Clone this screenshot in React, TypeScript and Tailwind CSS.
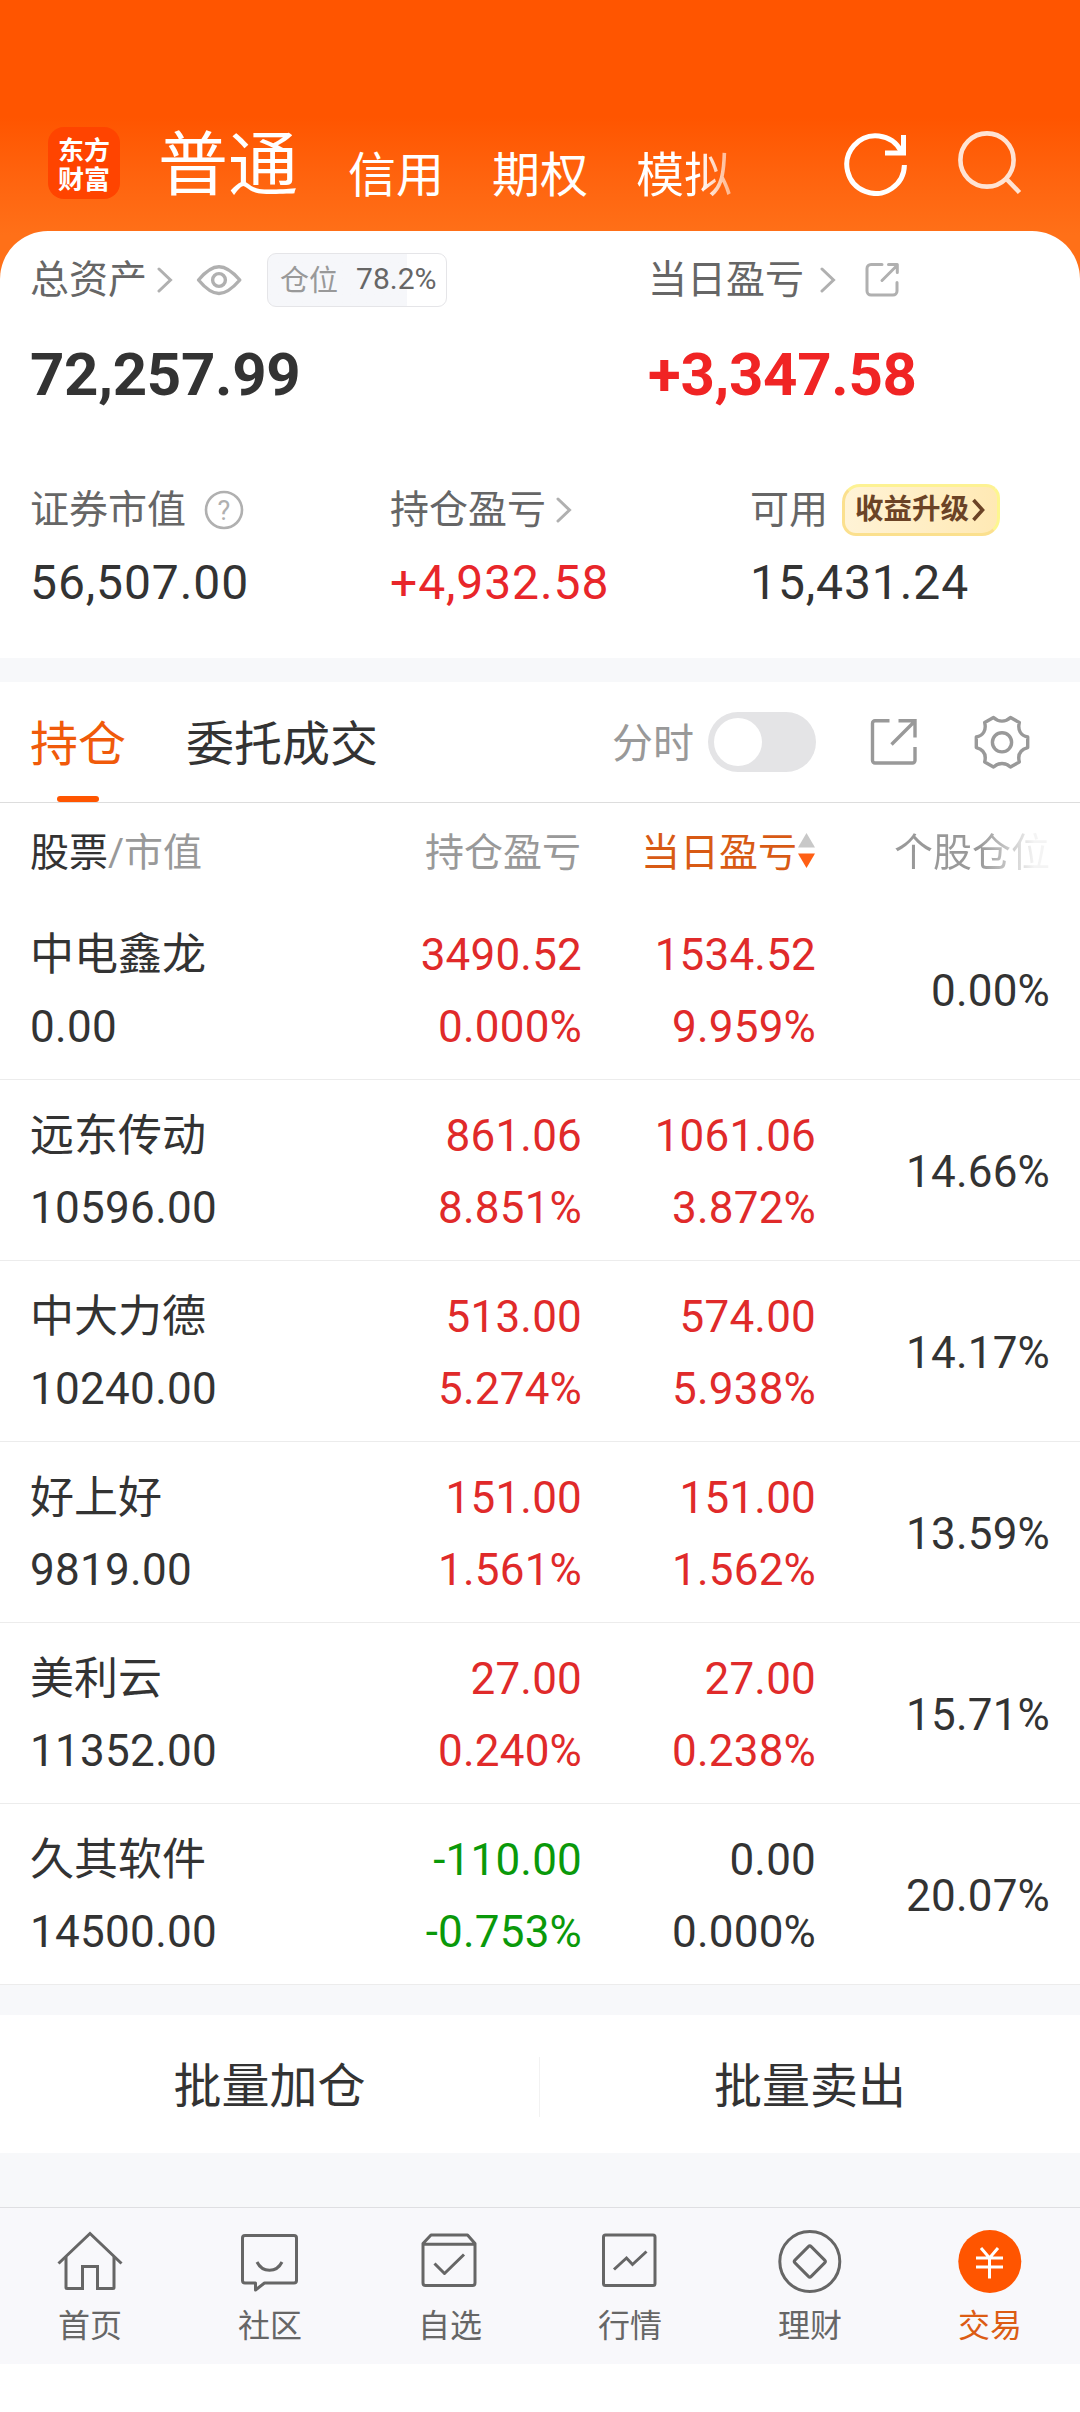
import type { ReactNode } from "react";

interface Holding {
  name: string;
  value: string;
  profit: string;
  profitRate: string;
  today: string;
  todayRate: string;
  position: string;
}

const holdings: Holding[] = [
  { name: "中电鑫龙", value: "0.00", profit: "3490.52", profitRate: "0.000%", today: "1534.52", todayRate: "9.959%", position: "0.00%" },
  { name: "远东传动", value: "10596.00", profit: "861.06", profitRate: "8.851%", today: "1061.06", todayRate: "3.872%", position: "14.66%" },
  { name: "中大力德", value: "10240.00", profit: "513.00", profitRate: "5.274%", today: "574.00", todayRate: "5.938%", position: "14.17%" },
  { name: "好上好", value: "9819.00", profit: "151.00", profitRate: "1.561%", today: "151.00", todayRate: "1.562%", position: "13.59%" },
  { name: "美利云", value: "11352.00", profit: "27.00", profitRate: "0.240%", today: "27.00", todayRate: "0.238%", position: "15.71%" },
  { name: "久其软件", value: "14500.00", profit: "-110.00", profitRate: "-0.753%", today: "0.00", todayRate: "0.000%", position: "20.07%" },
];

const trendColor = (amount: string) => {
  const n = parseFloat(amount);
  if (n > 0) return "text-[#e02a2a]";
  if (n < 0) return "text-[#0a990a]";
  return "text-[#333333]";
};

function Chevron() {
  return (
    <svg width="16" height="26" viewBox="0 0 16 26" fill="none" stroke="#b0b0b0" strokeWidth="3" strokeLinecap="round">
      <path d="M2 2 L13.5 13 L2 24" />
    </svg>
  );
}

function Header() {
  return (
    <header className="h-[280px] bg-linear-to-b from-[#ff5500] from-[42%] to-[#ff7018] to-[84%] pt-[121px]">
      <div className="flex h-[84px] items-center pl-12">
        <div className="flex h-[72px] w-[72px] items-center justify-center rounded-2xl bg-[#ff4400]">
          <span className="w-[52px] break-all font-['Noto_Sans_CJK_SC',sans-serif] text-[26px] leading-[29px] font-bold text-white">
            东方财富
          </span>
        </div>
        <div className="ml-[38px] pt-[5px] text-[70px] leading-[84px] text-white">普通</div>
        <nav className="ml-[50px] flex gap-12 pt-[25px] text-[48px] leading-[60px] text-white">
          <span>信用</span>
          <span>期权</span>
          <span className="bg-linear-to-r from-white from-65% to-white/50 bg-clip-text text-transparent">模拟</span>
        </nav>
        <svg className="ml-[111px]" width="66" height="66" viewBox="843 130 66 66" fill="none" stroke="#fff" strokeWidth="5">
          <path d="M904.4 165 A28.8 28.8 0 1 1 901 151" />
          <path d="M903.5 135 V153 H885" />
        </svg>
        <svg className="ml-[47px]" width="66" height="66" viewBox="956 130 66 66" fill="none" stroke="#ffe3d3" strokeWidth="4.6">
          <circle cx="987" cy="160" r="26.6" />
          <path d="M1006 178.500 L1019.500 192.500" />
        </svg>
      </div>
    </header>
  );
}

function Summary() {
  return (
    <section className="-mt-[49px] h-[427px] rounded-t-[48px] bg-white pt-[21px] text-[39px] text-[#666666]">
      <div className="flex h-[56px] items-center px-[30px]">
        <div className="flex w-[618px] items-center">
          <span>总资产</span>
          <span className="ml-2.5"><Chevron /></span>
          <svg className="ml-[22px]" width="48" height="34" viewBox="195 261 48 34" fill="none" stroke="#b0b0b0" strokeWidth="3.4">
            <path d="M198.500 278 C206 269 212 264.700 219 264.700 S232 269 239.800 278 C232 287 226 291.500 219 291.500 S206 287 198.500 278 Z" strokeLinejoin="round" />
            <circle cx="219" cy="278" r="6.400" />
          </svg>
          <div className="ml-6 flex h-[54px] w-[180px] items-center gap-[18px] overflow-hidden rounded-[9px] border border-[#e5e5e8] bg-linear-to-r from-[#f6f7fa] from-[78.2%] to-white to-[78.2%] pl-3 text-[29px]">
            <span className="pt-[3px] text-[#999999]">仓位</span>
            <span className="pb-[3px] text-[30px]">78.2%</span>
          </div>
        </div>
        <span>当日盈亏</span>
        <span className="ml-4"><Chevron /></span>
        <svg className="ml-[28px]" width="36" height="36" viewBox="864 262 36 36" fill="none" stroke="#b0b0b0" strokeWidth="3" strokeLinecap="round" strokeLinejoin="round">
          <path d="M882 264.500 H871 a4 4 0 0 0 -4 4 V291 a4 4 0 0 0 4 4 H893 a4 4 0 0 0 4 -4 V282.500" />
          <path d="M882 280.500 L897 265.500 M888.500 264.500 H897.300 V272.500" />
        </svg>
      </div>
      <div className="mt-[31px] flex px-[30px] text-[60px] leading-[72px] font-bold tracking-[-0.3px]">
        <span className="w-[618px] text-[#333333]">72,257.99</span>
        <span className="text-[#f02424]">+3,347.58</span>
      </div>
      <div className="mt-[71px] grid grid-cols-3">
        <div className="pl-[30px]">
          <div className="flex h-[56px] items-center">
            证券市值
            <svg className="ml-[18px]" width="40" height="40" viewBox="0 0 40 40">
              <circle cx="20" cy="20" r="18" fill="none" stroke="#b0b0b0" strokeWidth="2.600" />
              <text x="20" y="29.500" textAnchor="middle" fontSize="27" fill="#b0b0b0" fontFamily="Roboto">?</text>
            </svg>
          </div>
          <div className="mt-[17px] text-[48px] leading-[56px] tracking-[0.9px] text-[#333333]">56,507.00</div>
        </div>
        <div className="pl-[30px]">
          <div className="flex h-[56px] items-center gap-2.5">
            持仓盈亏
            <Chevron />
          </div>
          <div className="mt-[17px] text-[48px] leading-[56px] tracking-[0.9px] text-[#e8262a]">+4,932.58</div>
        </div>
        <div className="pl-[30px]">
          <div className="flex h-[56px] items-center">
            可用
            <div className="ml-[14px] flex h-[52px] w-[158px] items-center gap-[3px] rounded-[14px] rounded-tl-[18px] rounded-br-[18px] border-[3px] border-t-[#fdf293] border-r-[#fdf68f] border-b-[#fbe08e] border-l-[#fbe08e] bg-linear-to-r from-[#fff3d6] to-[#ffe9b4] pl-[10px] text-[28.500px] font-bold text-[#6b4326]">
              收益升级
              <svg width="13" height="24" viewBox="0 0 13 24" fill="none" stroke="#6b4326" strokeWidth="3.600">
                <path d="M1.500 2 L10.500 12 L1.500 22" />
              </svg>
            </div>
          </div>
          <div className="mt-[17px] text-[48px] leading-[56px] tracking-[0.9px] text-[#333333]">15,431.24</div>
        </div>
      </div>
    </section>
  );
}

function Tabs() {
  return (
    <div className="flex h-[121px] items-center border-b border-[#dddddd] pl-[30px] text-[48px]">
      <div className="flex h-[120px] flex-col items-center text-[#f05a0a]">
        <span className="h-[114px] leading-[126px]">持仓</span>
        <span className="h-1.5 w-[42px] rounded-full bg-[#ff5500]" />
      </div>
      <span className="ml-[60px] pt-[5px] text-[#333333]">委托成交</span>
      <span className="ml-[234px] pt-[5px] text-[41px] text-[#999999]">分时</span>
      <button className="ml-[14px] flex h-[60px] w-[108px] items-center rounded-full bg-[#e4e4e6] pl-1.5">
        <span className="h-12 w-12 rounded-full bg-white" />
      </button>
      <svg className="ml-[53px]" width="50" height="50" viewBox="869 717 50 50" fill="none" stroke="#999" strokeWidth="3.400">
        <path d="M889.500 720.700 H875 a2.500 2.500 0 0 0 -2.500 2.500 V760.500 a2.500 2.500 0 0 0 2.500 2.500 H912.500 a2.500 2.500 0 0 0 2.500 -2.500 V747" />
        <path d="M891.500 744.500 L914.500 721.500 M898.500 720.700 H915 V737.500" />
      </svg>
      <svg className="ml-[54px]" width="58" height="58" viewBox="973 713 58 58" fill="none" stroke="#999" strokeWidth="3.400" strokeLinejoin="round">
        <path d="M993.500 717.500 C998.500 722.300 1005.500 722.300 1010.500 717.500 L1019.300 722.500 C1017.500 730 1020.500 735.500 1027.700 737 V747.600 C1020.500 749.500 1017.500 754.500 1019.300 762 L1010.500 767 C1005.500 762.300 998.500 762.300 993.500 767 L984.700 762 C986.500 754.500 983.500 749.500 976.300 747.600 V737 C983.500 735.500 986.500 730 984.700 722.500 Z" />
        <circle cx="1002" cy="742.300" r="9.600" />
      </svg>
    </div>
  );
}

function HoldingsTable() {
  return (
    <div>
      <div className="grid h-24 grid-cols-[581px_234px_265px] items-center pt-1 text-[39px] text-[#999999]">
        <div className="flex justify-between pl-[30px]">
          <span><span className="text-[#333333]">股票</span>/市值</span>
          <span>持仓盈亏</span>
        </div>
        <div className="flex items-center justify-end gap-[1px] text-[#d85a14]">
          当日盈亏
          <svg className="mb-1" width="17" height="36" viewBox="0 0 17 36">
            <path d="M8.500 0 L17 14.500 H0 Z" fill="#c8c8c8" />
            <path d="M0 20.500 H17 L8.500 35 Z" fill="#ff5f14" />
          </svg>
        </div>
        <div className="pr-[30px] text-right">
          <span className="bg-linear-to-r from-[#999999] from-55% to-[#f4f4f4] to-90% bg-clip-text text-transparent">个股仓位</span>
        </div>
      </div>
      {holdings.map((item) => (
        <div
          key={item.name}
          className="grid h-[181px] grid-cols-[300px_282px_234px_234px] items-center border-b border-[#ececec] pt-[4px] text-[44px] leading-[72px] tracking-[0.2px] text-[#333333]"
        >
          <div className="pl-[30px]">
            <div className="tracking-normal">{item.name}</div>
            <div className="tracking-[0.3px]">{item.value}</div>
          </div>
          <div className={`text-right ${trendColor(item.profit)}`}>
            <div>{item.profit}</div>
            <div>{item.profitRate}</div>
          </div>
          <div className={`text-right ${trendColor(item.today)}`}>
            <div>{item.today}</div>
            <div>{item.todayRate}</div>
          </div>
          <div className="text-right">{item.position}</div>
        </div>
      ))}
    </div>
  );
}

function NavItem({ label, active, children }: { label: string; active?: boolean; children: ReactNode }) {
  return (
    <div className={`flex flex-1 flex-col items-center ${active ? "text-[#dc5c14]" : "text-[#666666]"}`}>
      {children}
      <span className="mt-2 text-[32px] leading-[46px]">{label}</span>
    </div>
  );
}

const iconProps = {
  width: 66,
  height: 66,
  fill: "none",
  stroke: "#666",
  strokeWidth: 3,
} as const;

function BottomNav() {
  return (
    <nav className="flex h-[157px] border-t border-[#dfdfe2] bg-[#f8f8fb] pt-[21px]">
      <NavItem label="首页">
        <svg {...iconProps} viewBox="57 2229 66 66">
          <path d="M58.500 2263.500 L90 2233.500 L121.500 2263.500" />
          <path d="M66 2257 V2287.500 a1 1 0 0 0 1 1 H82.500 V2266.500 H97.500 V2288.500 H113 a1 1 0 0 0 1 -1 V2257" />
        </svg>
      </NavItem>
      <NavItem label="社区">
        <svg {...iconProps} viewBox="237 2229 66 66" strokeLinejoin="round">
          <path d="M245 2235.500 H294 a2.500 2.500 0 0 1 2.500 2.500 V2280.500 a2.500 2.500 0 0 1 -2.500 2.500 H264.500 L255.500 2290 V2283 H245 a2.500 2.500 0 0 1 -2.500 -2.500 V2238 a2.500 2.500 0 0 1 2.500 -2.500 Z" />
          <path d="M257 2262 C262.500 2273 276.500 2273 282 2262" />
        </svg>
      </NavItem>
      <NavItem label="自选">
        <svg {...iconProps} viewBox="417 2229 66 66" strokeLinejoin="round">
          <path d="M423 2243.500 L431 2235 H467.500 L475 2243.500 V2283 a2.500 2.500 0 0 1 -2.500 2.500 H425.500 a2.500 2.500 0 0 1 -2.500 -2.500 Z M423 2244.300 H475" />
          <path d="M434.500 2263.500 L444.500 2273.500 L464 2254.500" />
        </svg>
      </NavItem>
      <NavItem label="行情">
        <svg {...iconProps} viewBox="597 2229 66 66">
          <rect x="603.500" y="2235" width="51.500" height="50.500" rx="2" />
          <path d="M614 2269.500 L626.500 2258 L632.500 2264.500 L646.500 2251.500" />
        </svg>
      </NavItem>
      <NavItem label="理财">
        <svg {...iconProps} viewBox="777 2229 66 66" strokeLinejoin="round">
          <circle cx="809.800" cy="2261.500" r="30" />
          <rect x="798.300" y="2250" width="23" height="23" rx="2" transform="rotate(45 809.800 2261.500)" />
        </svg>
      </NavItem>
      <NavItem label="交易" active>
        <svg {...iconProps} viewBox="957 2229 66 66" stroke="#fff">
          <circle cx="989.800" cy="2261.500" r="31.500" fill="#ff5500" stroke="none" />
          <path d="M981 2248 L989.500 2258 L998 2248 M976 2258 H1003 M976 2267 H1003 M989.500 2258 V2278.500" />
        </svg>
      </NavItem>
    </nav>
  );
}

export default function App() {
  return (
    <div className="h-[2412px] w-[1080px] overflow-hidden bg-white font-[Roboto,'Noto_Sans_CJK_SC',sans-serif]">
      <Header />
      <Summary />
      <div className="h-6 bg-[#f7f8fa]" />
      <Tabs />
      <HoldingsTable />
      <div className="h-[30px] bg-[#f7f8fa]" />
      <div className="flex h-[138px] items-center pt-[5px] text-center text-[48px] text-[#333333]">
        <span className="w-[539px]">批量加仓</span>
        <span className="h-[60px] w-px bg-[#f2f2f2]" />
        <span className="w-[540px]">批量卖出</span>
      </div>
      <div className="h-[54px] bg-[#f7f8fa]" />
      <BottomNav />
    </div>
  );
}
